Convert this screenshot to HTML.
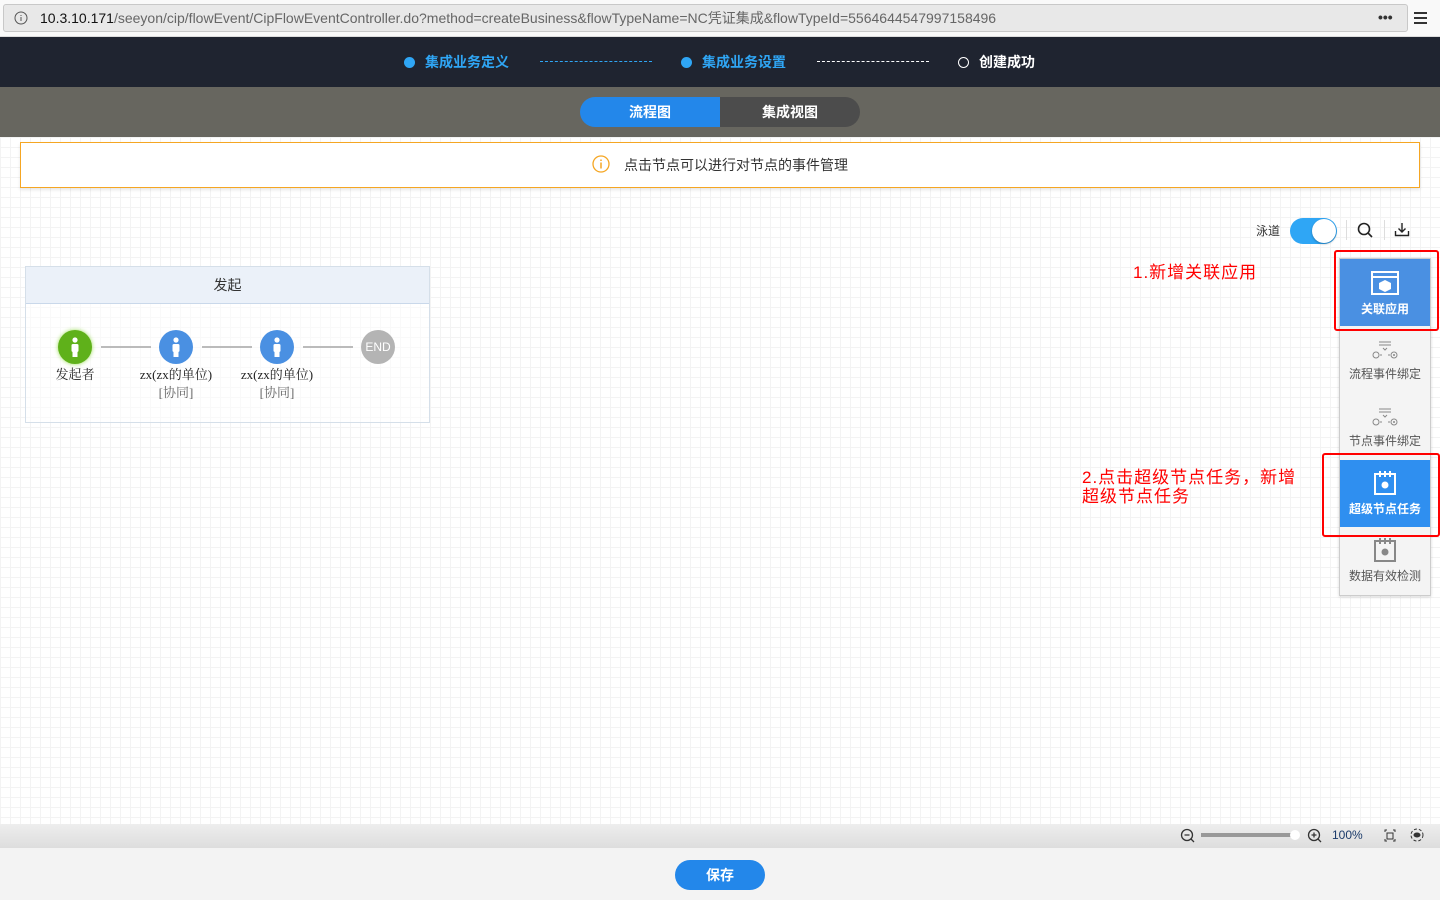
<!DOCTYPE html>
<html><head><meta charset="utf-8"><style>
*{margin:0;padding:0;box-sizing:border-box}
body{width:1440px;height:900px;overflow:hidden;font-family:"Liberation Sans","Noto Sans CJK SC",sans-serif;background:#fff;position:relative}
.abs{position:absolute}
#bar{left:0;top:0;width:1440px;height:37px;background:#f9f9f9;border-bottom:1px solid #ddd}
#url{left:3px;top:4px;width:1405px;height:28px;background:#e8e8e8;border:1px solid #c8c8c8;border-radius:3px;font-size:14px;line-height:26px;padding-left:36px;color:#666;white-space:nowrap}
#hdr{left:0;top:37px;width:1440px;height:50px;background:#1f2430}
#sub{left:0;top:87px;width:1440px;height:50px;background:#67665f}
.step{top:52px;font-size:14px;font-weight:bold;color:#2fa6f5;line-height:20px}
.dot{display:inline-block;width:11px;height:11px;border-radius:50%;background:#2fa6f5;margin-right:10px;vertical-align:-1px}
#canvas{left:0;top:137px;width:1440px;height:687px;background-color:#fff;background-image:linear-gradient(#f3f3f3 1px,transparent 1px),linear-gradient(90deg,#f3f3f3 1px,transparent 1px);background-size:10px 10px}
#tip{left:20px;top:142px;width:1400px;height:46px;background:#fff;border:1px solid #f5a623;box-shadow:0 2px 3px rgba(0,0,0,.1);font-size:14px;color:#333;text-align:center;line-height:44px}
.tb{left:25px;top:266px;width:405px;height:157px;border:1px solid #d5dfe9;background:rgba(255,255,255,.5)}
.tbh{height:37px;background:#ebf1f9;border-bottom:1px solid #c9d8ea;text-align:center;line-height:37px;font-size:14px;color:#333}
.nd{width:34px;height:34px;border-radius:50%}
.lbl{font-family:"Liberation Serif","Noto Serif CJK SC",serif;font-size:13px;color:#222;text-align:center;width:100px;line-height:18px}
.ln{height:2px;background:#bbb;top:346px;width:50px}
.side{left:1339px;top:258px;width:92px;height:338px;background:#f4f4f4;border:1px solid #ccc;box-shadow:0 1px 3px rgba(0,0,0,.15)}
.it{position:absolute;left:0;width:90px;height:67px;text-align:center;font-size:12px;color:#555}
.it.on{background:#3c8ee8;color:#fff;font-weight:bold}
.red{border:2px solid #f00;border-radius:3px}
.ann{color:#f00;font-size:17px;line-height:19px;letter-spacing:1px}
#foot{left:0;top:824px;width:1440px;height:24px;background:linear-gradient(#eee,#ddd)}
#bot{left:0;top:848px;width:1440px;height:52px;background:#f3f3f3}
</style></head><body>
<div id="bar" class="abs"><div id="url" class="abs"><span style="color:#111">10.3.10.171</span>/seeyon/cip/flowEvent/CipFlowEventController.do?method=createBusiness&amp;flowTypeName=NC凭证集成&amp;flowTypeId=5564644547997158496</div>
<svg class="abs" style="left:14px;top:11px" width="14" height="14"><circle cx="7" cy="7" r="6" fill="none" stroke="#555"/><path d="M7 6v4M7 4v1" stroke="#555"/></svg>
<div class="abs" style="left:1378px;top:9px;font-size:14px;color:#333;font-weight:bold">•••</div>
<svg class="abs" style="left:1414px;top:11px" width="13" height="14"><path d="M0 2h13M0 7h13M0 12h13" stroke="#333" stroke-width="2"/></svg></div>
<div id="hdr" class="abs"></div>
<div class="abs step" style="left:404px"><span class="dot"></span>集成业务定义</div>
<div class="abs" style="left:540px;top:61px;width:112px;border-top:1px dashed #2fa6f5"></div>
<div class="abs step" style="left:681px"><span class="dot"></span>集成业务设置</div>
<div class="abs" style="left:817px;top:61px;width:112px;border-top:1px dashed #fff"></div>
<div class="abs step" style="left:958px;color:#fff"><span class="dot" style="background:none;border:1.5px solid #fff"></span>创建成功</div>
<div id="sub" class="abs"></div>
<div class="abs" style="left:580px;top:97px;width:140px;height:30px;background:#2387ea;border-radius:15px 0 0 15px;color:#fff;font-weight:bold;font-size:14px;text-align:center;line-height:30px">流程图</div>
<div class="abs" style="left:720px;top:97px;width:140px;height:30px;background:#4c4c4c;border-radius:0 15px 15px 0;color:#fff;font-weight:bold;font-size:14px;text-align:center;line-height:30px">集成视图</div>
<div id="canvas" class="abs"></div>
<div id="tip" class="abs"><svg style="vertical-align:-3px;margin-right:14px" width="18" height="18"><circle cx="9" cy="9" r="8" fill="none" stroke="#f5a623" stroke-width="1.3"/><path d="M9 7.5v6M9 4.5v1.5" stroke="#f5a623" stroke-width="1.5"/></svg>点击节点可以进行对节点的事件管理</div>
<div class="abs" style="left:1256px;top:222px;font-size:12px;color:#333">泳道</div>
<div class="abs" style="left:1290px;top:218px;width:47px;height:26px;border-radius:13px;background:#2fa6f5"></div>
<div class="abs" style="left:1312px;top:219px;width:24px;height:24px;border-radius:50%;background:#fff;box-shadow:0 1px 2px rgba(0,0,0,.3)"></div>
<div class="abs" style="left:1346px;top:220px;height:20px;border-left:1px solid #ddd"></div>
<svg class="abs" style="left:1357px;top:222px" width="16" height="16"><circle cx="7" cy="7" r="5.5" fill="none" stroke="#222" stroke-width="1.6"/><path d="M11 11l4 4" stroke="#222" stroke-width="1.6"/></svg>
<div class="abs" style="left:1384px;top:220px;height:20px;border-left:1px solid #ddd"></div>
<svg class="abs" style="left:1394px;top:221px" width="16" height="16"><path d="M8 2v9M4.5 7.5L8 11l3.5-3.5M1.5 10v4.5h13V10" fill="none" stroke="#222" stroke-width="1.4"/></svg>
<div class="abs tb"><div class="tbh">发起</div></div>
<div class="abs nd" style="left:58px;top:330px;background:#5fb11a;box-shadow:0 0 4px #9d5"></div>
<div class="abs nd" style="left:159px;top:330px;background:#4a90e2"></div>
<div class="abs nd" style="left:260px;top:330px;background:#4a90e2"></div>
<div class="abs nd" style="left:361px;top:330px;background:#b4b4b4;color:#fff;font-size:12px;text-align:center;line-height:34px">END</div>
<svg class="abs" style="left:58px;top:330px" width="340" height="34"><g fill="#fff"><circle cx="17" cy="10" r="2.6"/><rect x="13.5" y="14" width="7" height="8" rx="1.5"/><rect x="14.5" y="21" width="5" height="6"/></g><g fill="#fff" transform="translate(101 0)"><circle cx="17" cy="10" r="2.6"/><rect x="13.5" y="14" width="7" height="8" rx="1.5"/><rect x="14.5" y="21" width="5" height="6"/></g><g fill="#fff" transform="translate(202 0)"><circle cx="17" cy="10" r="2.6"/><rect x="13.5" y="14" width="7" height="8" rx="1.5"/><rect x="14.5" y="21" width="5" height="6"/></g></svg>
<div class="abs ln" style="left:101px"></div><div class="abs ln" style="left:202px"></div><div class="abs ln" style="left:303px"></div>
<div class="abs lbl" style="left:25px;top:366px">发起者</div>
<div class="abs lbl" style="left:126px;top:366px">zx(zx的单位)<br><span style="color:#666">[协同]</span></div>
<div class="abs lbl" style="left:227px;top:366px">zx(zx的单位)<br><span style="color:#666">[协同]</span></div>
<div class="abs ann" style="left:1133px;top:263px">1.新增关联应用</div>
<div class="abs ann" style="left:1082px;top:468px">2.点击超级节点任务，新增<br>超级节点任务</div>
<div class="abs side">
<div class="it on" style="top:0;background:#4a90e2"><svg style="margin-top:12px" width="28" height="24"><rect x="1" y="1" width="26" height="22" fill="none" stroke="#fff" stroke-width="2"/><path d="M1 6h26" stroke="#fff" stroke-width="2"/><path d="M14 9l6 3v6l-6 3-6-3v-6z" fill="#fff"/></svg><div style="margin-top:2px">关联应用</div></div>
<div class="it" style="top:67px"><svg style="margin-top:14px" width="26" height="20"><path d="M7 2h12M7 5h12M11 8l2 2 2-2" stroke="#888" fill="none"/><circle cx="4" cy="15" r="3" fill="none" stroke="#888"/><circle cx="22" cy="15" r="3" fill="none" stroke="#888"/><circle cx="22" cy="15" r="1" fill="#888"/><path d="M8 15h2M16 15h2" stroke="#888"/></svg><div style="margin-top:2px">流程事件绑定</div></div>
<div class="it" style="top:134px"><svg style="margin-top:14px" width="26" height="20"><path d="M7 2h12M7 5h12M11 8l2 2 2-2" stroke="#888" fill="none"/><circle cx="4" cy="15" r="3" fill="none" stroke="#888"/><circle cx="22" cy="15" r="3" fill="none" stroke="#888"/><circle cx="22" cy="15" r="1" fill="#888"/><path d="M8 15h2M16 15h2" stroke="#888"/></svg><div style="margin-top:2px">节点事件绑定</div></div>
<div class="it on" style="top:201px;background:#2f8ff0"><svg style="margin-top:10px" width="24" height="26"><rect x="2" y="4" width="20" height="20" fill="none" stroke="#fff" stroke-width="2"/><path d="M7 1v6M12 1v6M17 1v6" stroke="#fff" stroke-width="2"/><circle cx="12" cy="15" r="3.5" fill="#fff"/></svg><div style="margin-top:1px">超级节点任务</div></div>
<div class="it" style="top:268px"><svg style="margin-top:10px" width="24" height="26"><rect x="2" y="4" width="20" height="20" fill="none" stroke="#888" stroke-width="2"/><path d="M7 1v6M12 1v6M17 1v6" stroke="#888" stroke-width="2"/><circle cx="12" cy="15" r="3.5" fill="#888"/></svg><div style="margin-top:1px">数据有效检测</div></div>
</div>
<div class="abs red" style="left:1334px;top:250px;width:105px;height:81px"></div>
<div class="abs red" style="left:1322px;top:453px;width:118px;height:84px"></div>
<div id="foot" class="abs"></div>
<svg class="abs" style="left:1180px;top:828px" width="250" height="16"><circle cx="7" cy="7" r="5.5" fill="none" stroke="#333" stroke-width="1.3"/><path d="M4.5 7h5M11 11l3 3" stroke="#333" stroke-width="1.3"/><rect x="21" y="5" width="92" height="4" fill="#999"/><circle cx="115" cy="7" r="5" fill="#fff"/><g transform="translate(127 0)"><circle cx="7" cy="7" r="5.5" fill="none" stroke="#333" stroke-width="1.3"/><path d="M4.5 7h5M7 4.5v5M11 11l3 3" stroke="#333" stroke-width="1.3"/></g><path d="M205 4v-2h2M213 2h2v2M215 11v2h-2M207 13h-2v-2" stroke="#333" fill="none"/><rect x="207" y="5" width="6" height="6" fill="none" stroke="#333"/><circle cx="237" cy="7" r="6" fill="none" stroke="#333" stroke-dasharray="3 2"/><ellipse cx="237" cy="7" rx="3.5" ry="2.5" fill="#333"/></svg>
<div class="abs" style="left:1332px;top:828px;font-size:12px;color:#1a3a6a">100%</div>
<div id="bot" class="abs"></div>
<div class="abs" style="left:675px;top:860px;width:90px;height:30px;border-radius:15px;background:#2387ea;color:#fff;font-weight:bold;font-size:14px;text-align:center;line-height:30px">保存</div>
</body></html>
